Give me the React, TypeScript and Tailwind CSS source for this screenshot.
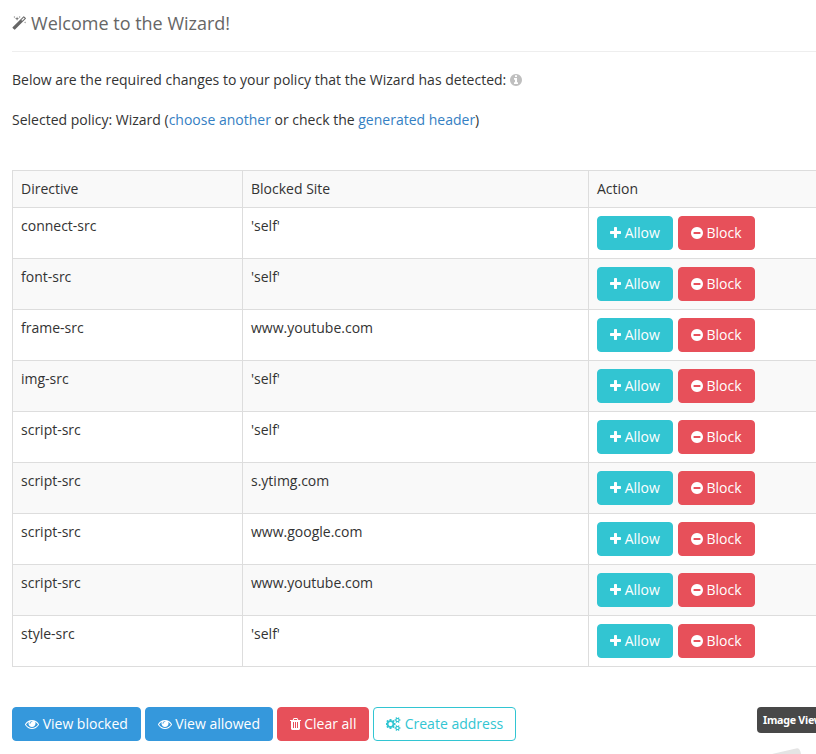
import React from "react";

type IconDef = { box: string; size: string; d: string };

const DISC =
  "q0 209-103 385.5t-279.5 279.5-385.5 103-385.5-103-279.5-279.5-103-385.5 103-385.5 279.5-279.5 385.5-103 385.5 103 279.5 279.5 103 385.5z";

const SMALL_GEAR =
  "v140q0 16-149 31-12 27-30 52 51 113 51 138 0 4-4 7-122 71-124 71-8 0-46-47t-52-68q-20 2-30 2t-30-2q-14 21-52 68t-46 47q-2 0-124-71-4-3-4-7 0-25 51-138-18-25-30-52-149-15-149-31v-140q0-16 149-31 13-29 30-52-51-113-51-138 0-4 4-7 4-2 35-20t59-34 30-16q8 0 46 46.5t52 67.5q20-2 30-2t30 2q51-71 92-112l6-2q4 0 124 70 4 3 4 7 0 25-51 138 17 23 30 52 149 15 149 31z";

const icons: Record<string, IconDef> = {
  plus: {
    box: "192 0 1408 1792",
    size: "h-[14px] w-[11px]",
    d: "M1600 736v192q0 40-28 68t-68 28h-416v416q0 40-28 68t-68 28h-192q-40 0-68-28t-28-68v-416h-416q-40 0-68-28t-28-68v-192q0-40 28-68t68-28h416v-416q0-40 28-68t68-28h192q40 0 68 28t28 68v416h416q40 0 68 28t28 68z",
  },
  minus: {
    box: "128 0 1536 1792",
    size: "h-[14px] w-[12px]",
    d: "M1344 960v-128q0-26-19-45t-45-19h-768q-26 0-45 19t-19 45v128q0 26 19 45t45 19h768q26 0 45-19t19-45zm320-64" + DISC,
  },
  info: {
    box: "128 0 1536 1792",
    size: "h-[14px] w-[12px]",
    d: "M1152 1376v-160q0-14-9-23t-23-9h-96v-512q0-14-9-23t-23-9h-320q-14 0-23 9t-9 23v160q0 14 9 23t23 9h96v320h-96q-14 0-23 9t-9 23v160q0 14 9 23t23 9h448q14 0 23-9t9-23zm-128-896v-160q0-14-9-23t-23-9h-192q-14 0-23 9t-9 23v160q0 14 9 23t23 9h192q14 0 23-9t9-23zm640 416" + DISC,
  },
  eye: {
    box: "0 0 1792 1792",
    size: "h-[14px] w-[14px]",
    d: "M1664 960q-152-236-381-353 61 104 61 225 0 185-131.5 316.5t-316.5 131.5-316.5-131.5-131.5-316.5q0-121 61-225-229 117-381 353 133 205 333.5 326.5t434.5 121.5 434.5-121.5 333.5-326.5zm-720-384q0-20-14-34t-34-14q-125 0-214.5 89.5t-89.5 214.5q0 20 14 34t34 14 34-14 14-34q0-86 61-147t147-61q20 0 34-14t14-34zm848 384q0 34-20 69-140 230-376.5 368.5t-499.5 138.5-499.5-139-376.5-368q-20-35-20-69t20-69q140-229 376.5-368t499.5-139 499.5 139 376.5 368q20 35 20 69z",
  },
  trash: {
    box: "192 0 1408 1792",
    size: "h-[14px] w-[11px]",
    d: "M704 1376v-704q0-14-9-23t-23-9h-64q-14 0-23 9t-9 23v704q0 14 9 23t23 9h64q14 0 23-9t9-23zm256 0v-704q0-14-9-23t-23-9h-64q-14 0-23 9t-9 23v704q0 14 9 23t23 9h64q14 0 23-9t9-23zm256 0v-704q0-14-9-23t-23-9h-64q-14 0-23 9t-9 23v704q0 14 9 23t23 9h64q14 0 23-9t9-23zm-544-992h448l-48-117q-7-9-17-11h-317q-10 2-17 11zm928 32v64q0 14-9 23t-23 9h-96v948q0 83-47 143.5t-113 60.5h-832q-66 0-113-58.5t-47-141.5v-952h-96q-14 0-23-9t-9-23v-64q0-14 9-23t23-9h309l70-167q15-37 54-63t79-26h320q40 0 79 26t54 63l70 167h309q14 0 23 9t9 23z",
  },
  cogs: {
    box: "0 0 1920 1792",
    size: "h-[14px] w-[15px]",
    d:
      "M832 896q0-106-75-181t-181-75-181 75-75 181 75 181 181 75 181-75 75-181zm768 512q0-52-38-90t-90-38-90 38-38 90q0 53 37.5 90.5t90.5 37.5 90.5-37.5 37.5-90.5zm0-1024q0-52-38-90t-90-38-90 38-38 90q0 53 37.5 90.5t90.5 37.5 90.5-37.5 37.5-90.5zm-384 421v185q0 10-7 19.5t-16 10.5l-155 24q-11 35-32 76 34 48 90 115 7 11 7 20 0 12-7 19-23 30-82.5 89.5t-78.5 59.5q-11 0-21-7l-115-90q-37 19-77 31-11 108-23 155-7 24-30 24h-186q-11 0-20-7.5t-10-17.5l-23-153q-34-10-75-31l-118 89q-7 7-20 7-11 0-21-8-144-133-144-160 0-9 7-19 10-14 41-53t47-61q-23-44-35-82l-152-24q-10-1-17-9.5t-7-19.5v-185q0-10 7-19.5t16-10.5l155-24q11-35 32-76-34-48-90-115-7-11-7-20 0-12 7-20 22-30 82-89t79-59q11 0 21 7l115 90q34-18 77-32 11-108 23-154 7-24 30-24h186q11 0 20 7.5t10 17.5l23 153q34 10 75 31l118-89q8-7 20-7 11 0 21 8 144 133 144 160 0 8-7 19-12 16-42 54t-45 60q23 48 34 82l152 23q10 2 17 10.5t7 19.5zm640 533" +
      SMALL_GEAR +
      "m0-1024" +
      SMALL_GEAR,
  },
  magic: {
    box: "64 0 1664 1792",
    size: "h-[15px] w-[14.4px]",
    d: "M1254 581l293-293-107-107-293 293zm447-293q0 27-18 45l-1286 1286q-18 18-45 18t-45-18l-198-198q-18-18-18-45t18-45l1286-1286q18-18 45-18t45 18l198 198q18 18 18 45zm-1351-190l98 30-98 30-30 98-30-98-98-30 98-30 30-98zm350 162l196 60-196 60-60 196-60-196-196-60 196-60 60-196zm930 478l98 30-98 30-30 98-30-98-98-30 98-30 30-98zm-640-640l98 30-98 30-30 98-30-98-98-30 98-30 30-98z",
  },
};

function Icon({ name, className = "align-[-2px]" }: { name: string; className?: string }) {
  const { box, size, d } = icons[name];
  return (
    <svg viewBox={box} className={`inline-block ${size} ${className}`} fill="currentColor" aria-hidden="true">
      <path d={d} />
    </svg>
  );
}

const tones = {
  teal: "border-[#32c5d2] bg-[#32c5d2] text-white",
  red: "border-[#e7505a] bg-[#e7505a] text-white",
  blue: "border-[#3598dc] bg-[#3598dc] text-white",
  outline: "border-[#32c5d2] bg-white text-[#32c5d2]",
};

function Button({ tone, icon, children }: { tone: keyof typeof tones; icon: string; children: React.ReactNode }) {
  return (
    <button className={`inline-block rounded-[4px] border px-3 py-1.5 align-middle text-[14px] leading-5 whitespace-nowrap ${tones[tone]}`}>
      <Icon name={icon} /> {children}
    </button>
  );
}

const rows = [
  ["connect-src", "'self'"],
  ["font-src", "'self'"],
  ["frame-src", "www.youtube.com"],
  ["img-src", "'self'"],
  ["script-src", "'self'"],
  ["script-src", "s.ytimg.com"],
  ["script-src", "www.google.com"],
  ["script-src", "www.youtube.com"],
  ["style-src", "'self'"],
];

const cell = "border border-[#ddd] p-2 text-left align-top font-normal";

export default function App() {
  return (
    <div className="relative h-[754px] w-full overflow-hidden bg-white pl-3 font-['Open_Sans',sans-serif] text-[14px] leading-5 text-[#333]">
      <h1 className="h-[52px] border-b border-[#eee] pt-[11px] text-[18px] leading-6 text-[#666]">
        <Icon name="magic" className="align-[-1px]" /> Welcome to the Wizard!
      </h1>
      <p className="mt-[18px]">
        Below are the required changes to your policy that the Wizard has detected:{" "}
        <Icon name="info" className="align-[-2px] text-[#bfbfbf]" />
      </p>
      <p className="mt-5">
        Selected policy: Wizard (<a className="text-[#3580c3]">choose another</a> or check the{" "}
        <a className="text-[#3580c3]">generated header</a>)
      </p>
      <table className="mt-10 w-[860px] table-fixed border-collapse">
        <colgroup>
          <col className="w-[230px]" />
          <col className="w-[346px]" />
          <col />
        </colgroup>
        <thead>
          <tr className="bg-[#f9f9f9]">
            <th className={cell}>Directive</th>
            <th className={cell}>Blocked Site</th>
            <th className={cell}>Action</th>
          </tr>
        </thead>
        <tbody>
          {rows.map(([directive, site], i) => (
            <tr key={i} className="h-[51px] even:bg-[#f9f9f9]">
              <td className={cell}>{directive}</td>
              <td className={cell}>{site}</td>
              <td className={cell}>
                <div className="flex gap-[5px]">
                  <Button tone="teal" icon="plus">Allow</Button>
                  <Button tone="red" icon="minus">Block</Button>
                </div>
              </td>
            </tr>
          ))}
        </tbody>
      </table>
      <div className="mt-10">
        <Button tone="blue" icon="eye">View blocked</Button>{" "}
        <Button tone="blue" icon="eye">View allowed</Button>{" "}
        <Button tone="red" icon="trash">Clear all</Button>{" "}
        <Button tone="outline" icon="cogs">Create address</Button>
      </div>
      <div className="absolute top-[707px] left-[757px] h-[26px] rounded-[4px] bg-[#484848] px-1.5 font-['Noto_Sans',sans-serif] text-[10.67px] leading-[26px] font-bold tracking-[-0.25px] whitespace-nowrap text-white">
        Image Viewer
      </div>
      <svg className="absolute top-[744px] left-[768px] h-[10px] w-[40px]" viewBox="0 0 40 10" aria-hidden="true">
        <path d="M4 10L28 4.500Q32 3.500 33 10Z" fill="#e4e4e4" />
      </svg>
    </div>
  );
}
